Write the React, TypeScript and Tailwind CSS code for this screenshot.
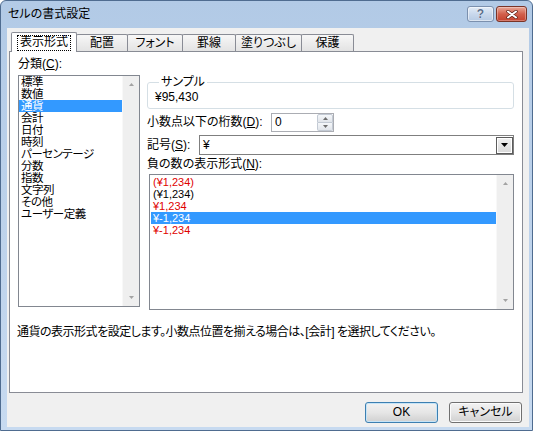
import React from "react";

function Up({ color = "#a3a3a3" }: { color?: string }) {
  return (
    <svg width="5" height="3" viewBox="0 0 5 3">
      <path d="M0 3 L2.5 0 L5 3 Z" fill={color} />
    </svg>
  );
}
function Down({ color = "#a3a3a3" }: { color?: string }) {
  return (
    <svg width="5" height="3" viewBox="0 0 5 3">
      <path d="M0 0 L5 0 L2.5 3 Z" fill={color} />
    </svg>
  );
}

function VScroll() {
  return (
    <div className="w-[17px] h-full flex flex-col justify-between bg-[#efefef] border-l border-[#f8f8f8]">
      <div className="h-[17px] flex items-center justify-center">
        <Up />
      </div>
      <div className="h-[17px] flex items-center justify-center">
        <Down />
      </div>
    </div>
  );
}

const categories = [
  "標準",
  "数値",
  "通貨",
  "会計",
  "日付",
  "時刻",
  "パーセンテージ",
  "分数",
  "指数",
  "文字列",
  "その他",
  "ユーザー定義",
];

const negatives: { t: string; red: boolean; sel?: boolean }[] = [
  { t: "(¥1,234)", red: true },
  { t: "(¥1,234)", red: false },
  { t: "¥1,234", red: true },
  { t: "¥-1,234", red: false, sel: true },
  { t: "¥-1,234", red: true },
];

function Tab({ label, w }: { label: string; w: string }) {
  return (
    <div
      className={`${w} h-[17px] -ml-px border border-b-0 border-[#898c95] rounded-t-[2px] bg-gradient-to-b from-[#f7f7f7] to-[#e3e3e3] flex items-center justify-center leading-[13px]`}
    >
      {label}
    </div>
  );
}

function HelpBtn() {
  return (
    <div className="w-[27px] h-[16px] rounded-[3px] border border-[#7b90ae] bg-gradient-to-b from-[#e3ecf7] via-[#c9d8ec] to-[#b6cae3] flex items-center justify-center shadow-[inset_0_0_0_1px_rgba(255,255,255,0.5)]">
      <span className="font-['Liberation_Sans',sans-serif] font-bold text-[12px] leading-[12px] text-[#5b6f8c] [text-shadow:0_0_1px_#ffffff]">
        ?
      </span>
    </div>
  );
}

function CloseBtn() {
  return (
    <div className="w-[31px] h-[16px] rounded-[3px] border border-[#7a3427] bg-gradient-to-b from-[#e8a797] via-[#d2604c] to-[#c4412d] flex items-center justify-center shadow-[inset_0_0_0_1px_rgba(255,255,255,0.3)]">
      <svg width="12" height="9" viewBox="0 0 12 9">
        <path d="M2 1.5 L10 7.5 M10 1.5 L2 7.5" stroke="#5a1f16" strokeWidth="3.4" strokeLinecap="round" />
        <path d="M2 1.5 L10 7.5 M10 1.5 L2 7.5" stroke="#ffffff" strokeWidth="2" strokeLinecap="round" />
      </svg>
    </div>
  );
}

export default function App() {
  return (
    <div className="w-[533px] h-[431px] flex flex-col border border-[#4f6c90] rounded-t-[6px] bg-gradient-to-b from-[#b2cae6] to-[#c7daf0] font-['Liberation_Sans','Noto_Sans_CJK_JP',sans-serif] [font-feature-settings:'palt'] text-[12px] leading-[13px] text-black overflow-hidden">
      {/* title bar */}
      <div className="h-[27px] shrink-0 flex items-start pl-[7px] pr-[5px]">
        <div className="mt-[6px] leading-[14px]">セルの書式設定</div>
        <div className="ml-auto mt-[5px] flex gap-[2px]">
          <HelpBtn />
          <CloseBtn />
        </div>
      </div>

      {/* body */}
      <div className="flex-1 flex pl-[6px] pr-[3px] pb-[3px]">
        <div className="flex-1 bg-[#f0f0f0] flex flex-col">
          {/* tabs */}
          <div className="relative z-10 h-[23px] flex items-end pl-[4px]">
            <div className="w-[66px] h-[20px] -mb-px border border-b-0 border-[#898c95] rounded-t-[2px] bg-white flex items-center justify-center">
              <span className="border border-dotted border-black px-[2px] leading-[13px] h-[16px] flex items-center">
                表示形式
              </span>
            </div>
            <Tab label="配置" w="w-[52px]" />
            <Tab label="フォント" w="w-[56px]" />
            <Tab label="罫線" w="w-[54px]" />
            <Tab label="塗りつぶし" w="w-[67px]" />
            <Tab label="保護" w="w-[53px]" />
          </div>

          {/* panel */}
          <div className="ml-[2px] w-[514px] h-[342px] border border-[#898c95] bg-white flex flex-col">
            <div className="flex items-start pt-[6px] pl-[8px]">
              {/* left column */}
              <div className="w-[122px] flex flex-col">
                <div className="h-[13px] leading-[13px]">
                  分類(<span className="underline underline-offset-[1px]">C</span>):
                </div>
                <div className="mt-[4px] h-[232px] border border-[#828790] bg-white flex">
                  <div className="flex-1 flex flex-col">
                    {categories.map((c) => (
                      <div
                        key={c}
                        className={
                          c === "通貨"
                            ? "h-[12px] leading-[12px] text-[11.5px] tracking-[-0.5px] pl-[2px] bg-[#3399ff] text-white whitespace-nowrap"
                            : "h-[12px] leading-[12px] text-[11.5px] tracking-[-0.5px] pl-[2px] whitespace-nowrap"
                        }
                      >
                        {c}
                      </div>
                    ))}
                  </div>
                  <VScroll />
                </div>
              </div>

              {/* right column */}
              <div className="ml-[7px] w-[367px] flex flex-col">
                <fieldset className="mt-[18px] border border-[#d5dfe5] rounded-[3px] pt-[3px] pb-[5px] pl-[7px]">
                  <legend className="ml-[4px] px-[2px] leading-[12px]">サンプル</legend>
                  <div className="leading-[12px]">¥95,430</div>
                </fieldset>

                <div className="mt-[4px] h-[19px] flex items-center">
                  <div className="w-[124px] whitespace-nowrap">
                    小数点以下の桁数(<span className="underline underline-offset-[1px]">D</span>):
                  </div>
                  <div className="w-[63px] h-[19px] border border-[#abadb3] bg-white flex">
                    <div className="flex-1 pl-[3px] leading-[17px]">0</div>
                    <div className="w-[16px] flex flex-col">
                      <div className="flex-1 border border-[#c3cad4] rounded-t-[2px] bg-gradient-to-b from-[#f5f7fa] to-[#e1e5ea] flex items-center justify-center">
                        <Up color="#6d6d6d" />
                      </div>
                      <div className="flex-1 border border-t-0 border-[#c3cad4] rounded-b-[2px] bg-gradient-to-b from-[#f5f7fa] to-[#e1e5ea] flex items-center justify-center">
                        <Down color="#6d6d6d" />
                      </div>
                    </div>
                  </div>
                </div>

                <div className="mt-[3px] h-[20px] flex items-center">
                  <div className="w-[52px] whitespace-nowrap">
                    記号(<span className="underline underline-offset-[1px]">S</span>):
                  </div>
                  <div className="flex-1 h-[20px] border border-[#7f7f7f] bg-white flex items-center">
                    <div className="flex-1 pl-[3px]">¥</div>
                    <div className="w-[17px] h-[17px] border border-[#5c5c5c] bg-gradient-to-b from-[#f0f0f0] to-[#d9d9d9] shadow-[inset_0_0_0_1px_#ffffff] flex items-center justify-center">
                      <svg width="7" height="4" viewBox="0 0 7 4">
                        <path d="M0 0 L7 0 L3.5 4 Z" fill="#000000" />
                      </svg>
                    </div>
                  </div>
                </div>

                <div className="mt-[3px] h-[13px] leading-[13px] whitespace-nowrap">
                  負の数の表示形式(<span className="underline underline-offset-[1px]">N</span>):
                </div>

                <div className="mt-[3px] ml-[2px] w-[365px] h-[136px] border border-[#828790] bg-white flex">
                  <div className="flex-1 flex flex-col pt-[1px] pl-[1px]">
                    {negatives.map((n, i) => (
                      <div
                        key={i}
                        className={
                          n.sel
                            ? "h-[12px] leading-[12px] pl-[2px] text-[11px] bg-[#3399ff] text-white"
                            : n.red
                            ? "h-[12px] leading-[12px] pl-[2px] text-[11px] text-[#e00000]"
                            : "h-[12px] leading-[12px] pl-[2px] text-[11px] text-black"
                        }
                      >
                        {n.t}
                      </div>
                    ))}
                  </div>
                  <VScroll />
                </div>
              </div>
            </div>

            <div className="mt-[16px] ml-[7px] leading-[13px] tracking-[-0.5px] whitespace-nowrap">
              通貨の表示形式を設定します。小数点位置を揃える場合は、[会計] を選択してください。
            </div>
          </div>

          {/* buttons */}
          <div className="mt-[9px] flex justify-end gap-[11px] pr-[7px]">
            <button className="w-[73px] h-[21px] rounded-[3px] border border-[#3c7fb1] bg-gradient-to-b from-[#f2f2f2] via-[#e6e6e6] to-[#d0d0d0] shadow-[inset_0_0_0_1px_#c6e4f7] text-[12px] leading-[13px]">
              OK
            </button>
            <button className="w-[73px] h-[21px] rounded-[3px] border border-[#707070] bg-gradient-to-b from-[#f2f2f2] via-[#e6e6e6] to-[#d0d0d0] shadow-[inset_0_0_0_1px_#fbfbfb] text-[12px] leading-[13px]">
              キャンセル
            </button>
          </div>
        </div>
      </div>
    </div>
  );
}
